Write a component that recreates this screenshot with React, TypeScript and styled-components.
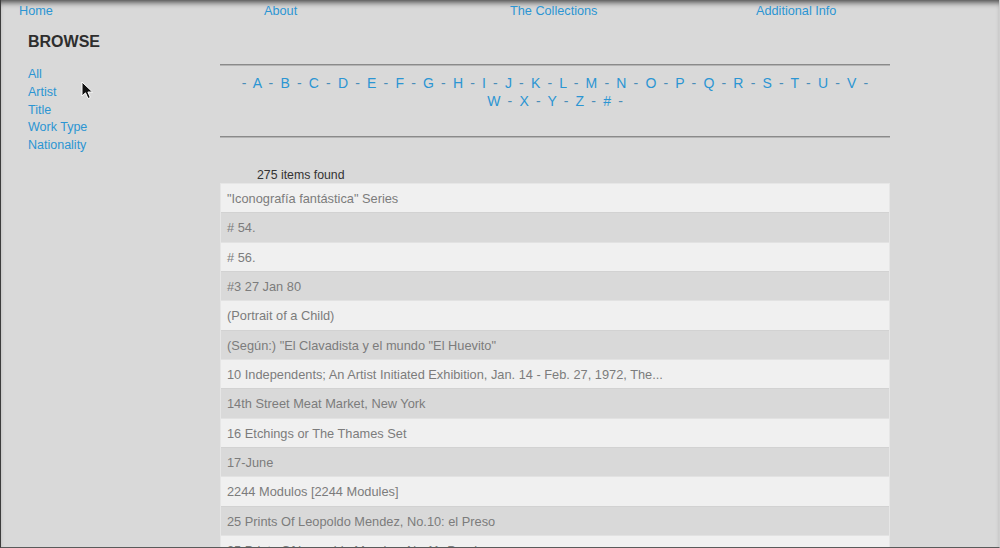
import React from "react";
import styled, { createGlobalStyle } from "styled-components";

const Global = createGlobalStyle`
  html, body { margin: 0; padding: 0; background: #d9d9d9; }
  body { font-family: "Liberation Sans", Arial, sans-serif; }
  a { text-decoration: none; }
`;

const Frame = styled.div`
  position: relative;
  box-sizing: border-box;
  width: 1000px;
  height: 548px;
  overflow: hidden;
  background: #d9d9d9;
  border-left: 1px solid #3c3c3c;
  border-bottom: 1px solid #5a5a5a;
  border-right: 1px solid #cfcfcf;
  box-shadow: inset 0 6px 6px -4px rgba(0, 0, 0, 0.75);
`;

const Nav = styled.nav`
  display: grid;
  grid-template-columns: 245px 246px 246px 246px;
  padding-left: 18px;
  height: 22px;
  align-items: center;
`;

const NavLink = styled.a`
  font-size: 12.7px;
  line-height: 22px;
  color: #2b95d3;
`;

const Body = styled.div`
  display: flex;
`;

const Sidebar = styled.aside`
  width: 219px;
  box-sizing: border-box;
  padding: 10px 0 0 27px;
  display: flex;
  flex-direction: column;
`;

const Heading = styled.h2`
  margin: 0 0 15px;
  font-size: 16px;
  line-height: 19px;
  font-weight: bold;
  color: #2e2e2e;
`;

const SideLink = styled.a`
  font-size: 12.5px;
  line-height: 17.8px;
  color: #2b95d3;
`;

const Main = styled.main`
  width: 670px;
  padding-top: 42px;
`;

const Rule = styled.div`
  height: 2px;
  background: #8a8a8a;
  border-bottom: 1px solid #b4b4b4;
  box-sizing: border-box;
`;

const Alphabet = styled.div`
  padding: 8px 20px 26px;
  text-align: center;
  font-size: 14px;
  line-height: 18px;
  color: #2b95d3;
  word-spacing: 3.28px;
`;

const Letter = styled.a`
  color: #2b95d3;
`;

const Dash = styled.span`
  color: #4a8db8;
`;

const Count = styled.div`
  padding: 30px 0 0 37px;
  font-size: 12.3px;
  line-height: 15px;
  color: #333;
`;

const List = styled.ul`
  list-style: none;
  margin: 0;
  padding: 0;
  border-left: 1px solid #e6e6e6;
  border-right: 1px solid #e6e6e6;
  border-top: 1px solid #e6e6e6;
`;

const Row = styled.li<{ $alt: boolean }>`
  box-sizing: border-box;
  height: 29.33px;
  padding: 1px 6px 0;
  display: flex;
  align-items: center;
  font-size: 12.8px;
  color: #7c7c7c;
  background: ${(p) => (p.$alt ? "#d9d9d9" : "#f0f0f0")};
  border-bottom: 1px solid ${(p) => (p.$alt ? "#e2e2e2" : "#d2d2d2")};
  white-space: nowrap;
  overflow: hidden;
`;

const Cursor = styled.svg`
  position: absolute;
  left: 80px;
  top: 81px;
`;

const letters = "ABCDEFGHIJKLMNOPQRSTUVWXYZ#".split("");

const items = [
  "\"Iconografía fantástica\" Series",
  "# 54.",
  "# 56.",
  "#3 27 Jan 80",
  "(Portrait of a Child)",
  "(Según:) \"El Clavadista y el mundo \"El Huevito\"",
  "10 Independents; An Artist Initiated Exhibition, Jan. 14 - Feb. 27, 1972, The...",
  "14th Street Meat Market, New York",
  "16 Etchings or The Thames Set",
  "17-June",
  "2244 Modulos [2244 Modules]",
  "25 Prints Of Leopoldo Mendez, No.10: el Preso",
  "25 Prints Of Leopoldo Mendez, No.11: Pareja",
];

export default function App() {
  return (
    <>
      <Global />
      <Frame>
        <Nav>
          <NavLink href="#">Home</NavLink>
          <NavLink href="#">About</NavLink>
          <NavLink href="#">The Collections</NavLink>
          <NavLink href="#">Additional Info</NavLink>
        </Nav>
        <Body>
          <Sidebar>
            <Heading>BROWSE</Heading>
            <SideLink href="#">All</SideLink>
            <SideLink href="#">Artist</SideLink>
            <SideLink href="#">Title</SideLink>
            <SideLink href="#">Work Type</SideLink>
            <SideLink href="#">Nationality</SideLink>
          </Sidebar>
          <Main>
            <Rule />
            <Alphabet>
              {letters.map((l) => (
                <React.Fragment key={l}>
                  <Dash>-</Dash> <Letter href="#">{l}</Letter>{" "}
                </React.Fragment>
              ))}
              <Dash>-</Dash>
            </Alphabet>
            <Rule />
            <Count>275 items found</Count>
            <List>
              {items.map((t, i) => (
                <Row key={i} $alt={i % 2 === 1}>
                  {t}
                </Row>
              ))}
            </List>
          </Main>
        </Body>
        <Cursor width="14" height="20" viewBox="0 0 14 20">
          <path
            d="M1 1 L1 15 L4.5 11.8 L7 17.5 L9.3 16.5 L6.9 11 L11.5 11 Z"
            fill="#111"
            stroke="#fff"
            strokeWidth="1"
            strokeLinejoin="round"
          />
        </Cursor>
      </Frame>
    </>
  );
}
